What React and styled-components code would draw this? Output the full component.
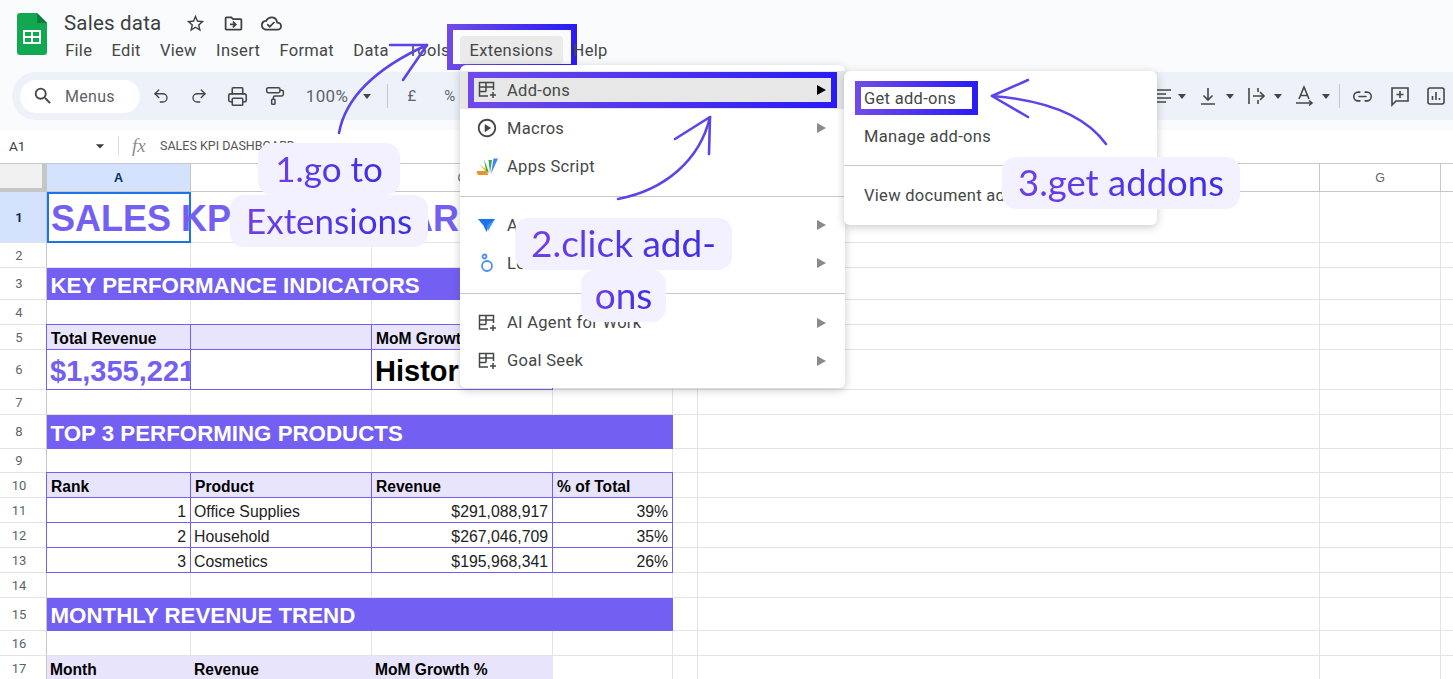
import styled, { createGlobalStyle } from 'styled-components';
import {
	MdArrowDropDown,
	MdOutlineCloudDone,
	MdOutlineDriveFileMove,
	MdOutlinePlayCircle,
	MdOutlineStarBorder,
	MdSearch,
} from 'react-icons/md';
import { Link2, PaintRoller, Printer, Redo2, Undo2 } from 'lucide-react';

const PURPLE = '#7360f2';
const LILAC = '#e8e4fb';
const GRID = '#e2e3e3';
const INK = '#444746';
const FRAME = 'linear-gradient(90deg, #6f4ae8, #2a1cf5) 1';

const COLUMNS = [47, 144, 181, 181, 120, 25, 622, 121, 132];
const LETTERS = ['A', 'B', 'C', 'D', '', 'F', 'G', 'H'];

const ROWS = [
	{ n: 1, h: 51, active: true, cells: [{ tone: 'selected', text: 'SALES KPI DASHBOARD' }, { tone: 'flow' }, { tone: 'flow' }] },
	{ n: 2, h: 25 },
	{ n: 3, h: 32, cells: [{ tone: 'bar', span: 4, text: 'KEY PERFORMANCE INDICATORS' }] },
	{ n: 4, h: 25 },
	{
		n: 5,
		h: 25,
		cells: [
			{ tone: 'label', text: 'Total Revenue' },
			{ tone: 'label' },
			{ tone: 'label', text: 'MoM Growth %' },
		],
	},
	{
		n: 6,
		h: 40,
		cells: [
			{ tone: 'stat', text: '$1,355,221,000' },
			{ tone: 'boxed' },
			{ tone: 'statDark', text: 'Historical' },
		],
	},
	{ n: 7, h: 25 },
	{ n: 8, h: 34, cells: [{ tone: 'bar', span: 4, text: 'TOP 3 PERFORMING PRODUCTS' }] },
	{ n: 9, h: 24 },
	{
		n: 10,
		h: 25,
		cells: [
			{ tone: 'label', text: 'Rank' },
			{ tone: 'label', text: 'Product' },
			{ tone: 'label', text: 'Revenue' },
			{ tone: 'label', text: '% of Total' },
		],
	},
	{
		n: 11,
		h: 25,
		cells: [
			{ tone: 'number', text: '1' },
			{ tone: 'boxed', text: 'Office Supplies' },
			{ tone: 'number', text: '$291,088,917' },
			{ tone: 'number', text: '39%' },
		],
	},
	{
		n: 12,
		h: 25,
		cells: [
			{ tone: 'number', text: '2' },
			{ tone: 'boxed', text: 'Household' },
			{ tone: 'number', text: '$267,046,709' },
			{ tone: 'number', text: '35%' },
		],
	},
	{
		n: 13,
		h: 25,
		cells: [
			{ tone: 'number', text: '3' },
			{ tone: 'boxed', text: 'Cosmetics' },
			{ tone: 'number', text: '$195,968,341' },
			{ tone: 'number', text: '26%' },
		],
	},
	{ n: 14, h: 25 },
	{ n: 15, h: 33, cells: [{ tone: 'bar', span: 4, text: 'MONTHLY REVENUE TREND' }] },
	{ n: 16, h: 25 },
	{
		n: 17,
		h: 25,
		cells: [
			{ tone: 'plainLabel', text: 'Month' },
			{ tone: 'plainLabel', text: 'Revenue' },
			{ tone: 'plainLabel', text: 'MoM Growth %' },
		],
	},
];

const GlobalStyle = createGlobalStyle`
	html, body {
		margin: 0;
		padding: 0;
		background: #fff;
	}
	* {
		box-sizing: border-box;
	}
`;

const Page = styled.div`
	position: relative;
	width: 1453px;
	height: 679px;
	overflow: hidden;
	font-family: Roboto, 'Liberation Sans', sans-serif;
	color: ${INK};
	background: #fff;
`;

const Header = styled.header`
	height: 130px;
	padding: 0 12px;
	background: #f9fbfd;
	display: flex;
	flex-direction: column;
`;

const TitleRow = styled.div`
	height: 72px;
	display: flex;
	gap: 17px;
	padding: 13px 0 0 5px;
`;

const TitleStack = styled.div`
	display: flex;
	flex-direction: column;
	gap: 3px;
`;

const TitleLine = styled.div`
	display: flex;
	align-items: center;
	gap: 17px;
	height: 20px;
	font-size: 20.5px;
	letter-spacing: 0.2px;
	color: #3c4043;
	svg {
		font-size: 21px;
	}
`;

const DocName = styled.span`
	margin-right: 6.5px;
`;

const MenuBar = styled.nav`
	display: flex;
	height: 28px;
	align-items: center;
	font-size: 16.5px;
	letter-spacing: 0.3px;
	margin-left: -8.5px;
`;

const MenuTab = styled.span`
	position: relative;
	display: flex;
	align-items: center;
	height: 28px;
	padding: 0 ${(p) => (p.$active ? '10px' : '9.65px')};
	border-radius: 4px;
	background: ${(p) => (p.$active ? '#ebebeb' : 'transparent')};
	&::after {
		content: ${(p) => (p.$active ? "''" : 'none')};
		position: absolute;
		inset: -12px -14px -6px -13px;
		border: 6px solid;
		border-image: ${FRAME};
	}
`;

const Toolbar = styled.div`
	height: 48px;
	margin-right: -12px;
	padding-left: 8px;
	display: flex;
	align-items: center;
	justify-content: space-between;
	background: #edf2fa;
	border-radius: 24px 0 0 24px;
`;

const ToolGroup = styled.div`
	display: flex;
	align-items: center;
`;

const SearchPill = styled.div`
	width: 120px;
	height: 33px;
	margin-right: 2px;
	padding: 0 12px;
	display: flex;
	align-items: center;
	gap: 11px;
	background: #fff;
	border-radius: 17px;
	font-size: 16px;
	letter-spacing: 0.3px;
	color: #5f6368;
	svg {
		font-size: 22px;
		color: ${INK};
	}
`;

const Tool = styled.span`
	width: ${(p) => p.$w || 38}px;
	height: 28px;
	display: flex;
	align-items: center;
	justify-content: center;
	font-size: ${(p) => p.$text || 15}px;
	letter-spacing: 0.3px;
	color: #5f6368;
	svg {
		flex: none;
		color: ${INK};
	}
`;

const ToolDivider = styled.span`
	width: 1px;
	height: 24px;
	margin: 0 ${(p) => p.$right}px 0 ${(p) => p.$left}px;
	background: #c7c7c7;
`;

const Caret = styled.i`
	width: 0;
	height: 0;
	margin: 0 ${(p) => p.$after ?? 8}px 0 3px;
	border: 4.5px solid transparent;
	border-top: 5px solid ${INK};
	border-bottom: 0;
`;

const FormulaBar = styled.div`
	height: 34px;
	padding: 0 0 2px 9px;
	display: flex;
	align-items: center;
	background: #fff;
	font-size: 13.5px;
	border-bottom: 1px solid #c7c7c7;
`;

const NameBox = styled.div`
	width: 109px;
	display: flex;
	align-items: center;
	justify-content: space-between;
	padding-right: 8px;
	color: #3c4043;
`;

const FxMark = styled.span`
	width: 1px;
	height: 20px;
	background: #e0e0e0;
`;

const Fx = styled.em`
	width: 41px;
	padding-left: 13px;
	font-family: 'Liberation Serif', serif;
	font-size: 19px;
	color: #8a8d91;
`;

const FormulaText = styled.span`
	font-size: 12.5px;
	color: #555;
`;

const Sheet = styled.main`
	display: grid;
	grid-template-columns: ${COLUMNS.map((c) => `${c}px`).join(' ')};
	grid-template-rows: 28px ${ROWS.map((r) => `${r.h}px`).join(' ')};
`;

const Corner = styled.div`
	background: #f1f1f1;
	border-right: 5px solid #c4c7c5;
	border-bottom: 4px solid #c4c7c5;
`;

const ColHead = styled.div`
	display: flex;
	align-items: center;
	justify-content: center;
	font-size: 12.5px;
	font-family: 'Liberation Sans', sans-serif;
	color: ${(p) => (p.$active ? '#0b2b60' : '#5f6368')};
	font-weight: ${(p) => (p.$active ? 700 : 400)};
	background: ${(p) => (p.$active ? '#d3e3fd' : '#fff')};
	border-right: 1px solid #c7c7c7;
	border-bottom: 1px solid #c7c7c7;
`;

const RowHead = styled.div`
	display: flex;
	align-items: center;
	justify-content: center;
	padding-right: 8px;
	font-size: 13px;
	color: ${(p) => (p.$active ? '#0b2b60' : '#5f6368')};
	font-weight: ${(p) => (p.$active ? 700 : 400)};
	background: ${(p) => (p.$active ? '#d3e3fd' : '#fff')};
	border-right: 1px solid #c7c7c7;
	border-bottom: 1px solid ${GRID};
`;

const toneStyles = {
	blank: `border-right: 1px solid ${GRID}; border-bottom: 1px solid ${GRID};`,
	flow: `border-bottom: 1px solid ${GRID};`,
	selected: `
		position: relative;
		z-index: 1;
		overflow: visible;
		padding: 3px 0 0 2px;
		border: 2px solid #1a73e8;
		font-size: 36px;
		font-weight: 700;
		color: ${PURPLE};
	`,
	bar: `
		padding: 3px 0 0 3.5px;
		background: ${PURPLE};
		color: #fff;
		font-size: 22.3px;
		font-weight: 700;
	`,
	label: `
		margin: -1px 0 0 -1px;
		padding: 4px 0 0 4px;
		background: ${LILAC};
		border: 1px solid ${PURPLE};
		font-size: 15.6px;
		font-weight: 700;
		color: #000;
	`,
	plainLabel: `
		padding: 3px 0 0 3px;
		background: ${LILAC};
		font-size: 15.6px;
		font-weight: 700;
		color: #000;
	`,
	boxed: `
		margin: -1px 0 0 -1px;
		padding: 4px 0 0 3px;
		border: 1px solid ${PURPLE};
		font-size: 15.8px;
		color: #222;
	`,
	number: `
		margin: -1px 0 0 -1px;
		padding: 4px 4px 0 0;
		justify-content: flex-end;
		border: 1px solid ${PURPLE};
		font-size: 15.8px;
		color: #222;
	`,
	stat: `
		margin: -1px 0 0 -1px;
		padding: 4px 0 0 3px;
		border: 1px solid ${PURPLE};
		font-size: 29px;
		font-weight: 700;
		color: ${PURPLE};
	`,
	statDark: `
		margin: -1px 0 0 -1px;
		padding: 4px 0 0 3px;
		border: 1px solid ${PURPLE};
		font-size: 29px;
		font-weight: 700;
		color: #000;
	`,
};

const Cell = styled.div`
	display: flex;
	align-items: center;
	min-width: 0;
	overflow: hidden;
	white-space: nowrap;
	font-family: 'Liberation Sans', sans-serif;
	grid-column: span ${(p) => p.$span || 1};
	${(p) => toneStyles[p.$tone || 'blank']}
`;

const Menu = styled.div`
	position: absolute;
	left: ${(p) => p.$left}px;
	top: ${(p) => p.$top}px;
	width: ${(p) => p.$width}px;
	padding: ${(p) => p.$pad};
	background: #fff;
	border-radius: 6px;
	box-shadow: 0 2px 8px rgba(60, 64, 67, 0.28);
	z-index: 3;
	font-size: 16.5px;
	letter-spacing: 0.3px;
`;

const MenuItem = styled.div`
	position: relative;
	height: 38.3px;
	display: flex;
	align-items: center;
	padding: 0 19px 0 ${(p) => p.$indent || 16}px;
	gap: 9px;
	background: ${(p) => (p.$active ? '#e7e7e7' : 'transparent')};
	&::after {
		content: ${(p) => (p.$frame ? "''" : 'none')};
		position: absolute;
		inset: ${(p) => p.$frame};
		border: 6px solid;
		border-image: ${FRAME};
	}
`;

const ItemIcon = styled.span`
	width: 22px;
	display: flex;
	justify-content: center;
	font-size: 22px;
`;

const ItemLabel = styled.span`
	flex: 1;
`;

const SubArrow = styled.i`
	width: 0;
	height: 0;
	border: 5px solid transparent;
	border-left: 9px solid ${(p) => (p.$active ? '#000' : '#8a8a8a')};
	border-right: 0;
`;

const MenuRule = styled.hr`
	margin: ${(p) => p.$gap || '10px 0'};
	border: 0;
	border-top: 1px solid #c9c9c9;
`;

const Callout = styled.div`
	position: absolute;
	left: ${(p) => p.$left}px;
	top: ${(p) => p.$top}px;
	z-index: 5;
	display: flex;
	flex-direction: column;
	align-items: center;
	font-family: Lato, 'Noto Sans', sans-serif;
	font-size: ${(p) => p.$size}px;
`;

const CalloutLine = styled.span`
	display: block;
	height: 52px;
	padding: 0 ${(p) => p.$pad || 16}px;
	border-radius: 14px;
	background: #f3f0ff;
	white-space: nowrap;
`;

const CalloutText = styled.span`
	display: block;
	line-height: 50px;
	background: linear-gradient(90deg, #6d3fe8, #3a2ee6);
	-webkit-background-clip: text;
	background-clip: text;
	color: transparent;
`;

const Doodles = styled.svg`
	position: absolute;
	inset: 0;
	z-index: 4;
	pointer-events: none;
`;

const SheetsLogo = () => (
	<svg width="30" height="42" viewBox="0 0 30 42">
		<path d="M3 0h17l10 10v29a3 3 0 0 1-3 3H3a3 3 0 0 1-3-3V3a3 3 0 0 1 3-3z" fill="#11a84f" />
		<path d="M20 0l10 10h-10z" fill="#0b7d3c" />
		<path d="M6 17h18v14H6z" fill="#fff" />
		<path d="M8 19h6v4H8zM16 19h6v4h-6zM8 25h6v4H8zM16 25h6v4h-6z" fill="#11a84f" />
	</svg>
);

const AddOnIcon = () => (
	<svg width="22" height="22" viewBox="0 0 22 22" fill="none" stroke="#444746" strokeWidth="1.5">
		<path d="M12 17H3.5V3.5h14V11" />
		<path d="M3.5 8h14M3.5 12.5H10M10 3.5v9" />
		<path d="M17 13v6M14 16h6" />
	</svg>
);

const AppsScriptIcon = () => (
	<svg width="22" height="18" viewBox="0 0 22 18">
		<path d="M1 13h10l1 4H3a3 3 0 0 1-2-4z" fill="#e8912d" />
		<path d="M3 6l8 6 1 4z" fill="#f4c20d" />
		<path d="M8 1l5 14-3-2z" fill="#34a853" />
		<path d="M12.5 2h3.5l-2 13z" fill="#34a853" />
		<path d="M17.5 0.5h4.5l-7 15.5z" fill="#4285f4" />
	</svg>
);

const AppSheetIcon = () => (
	<svg width="20" height="16" viewBox="0 0 20 16">
		<path d="M1 2h17l-5 6H6z" fill="#1a73e8" />
		<path d="M6 7.5h6L9.5 15z" fill="#1a73e8" />
		<path d="M18 2l-7 12-1.5-5z" fill="#4a90f0" />
	</svg>
);

const LookerIcon = () => (
	<svg width="18" height="20" viewBox="0 0 18 20" fill="none" stroke="#4f8ff0" strokeWidth="1.8">
		<circle cx="9" cy="13" r="5" />
		<circle cx="6.5" cy="3.5" r="2" />
	</svg>
);

const ToolIcon = ({ children }) => (
	<svg width="22" height="22" viewBox="0 0 22 22" fill="none" stroke="#444746" strokeWidth="1.6">
		{children}
	</svg>
);

const App = () => {
	return (
		<Page>
			<GlobalStyle />
			<Header>
				<TitleRow>
					<SheetsLogo />
					<TitleStack>
						<TitleLine>
							<DocName>Sales data</DocName>
							<MdOutlineStarBorder />
							<MdOutlineDriveFileMove />
							<MdOutlineCloudDone />
						</TitleLine>
						<MenuBar>
							<MenuTab>File</MenuTab>
							<MenuTab>Edit</MenuTab>
							<MenuTab>View</MenuTab>
							<MenuTab>Insert</MenuTab>
							<MenuTab>Format</MenuTab>
							<MenuTab>Data</MenuTab>
							<MenuTab>Tools</MenuTab>
							<MenuTab $active>Extensions</MenuTab>
							<MenuTab>Help</MenuTab>
						</MenuBar>
					</TitleStack>
				</TitleRow>
				<Toolbar>
					<ToolGroup>
						<SearchPill>
							<MdSearch />
							Menus
						</SearchPill>
						<Tool><Undo2 size={18} strokeWidth={1.8} /></Tool>
						<Tool><Redo2 size={18} strokeWidth={1.8} /></Tool>
						<Tool><Printer size={21} strokeWidth={1.8} /></Tool>
						<Tool><PaintRoller size={20} strokeWidth={1.8} /></Tool>
						<Tool $w={66} $text={17}>100%</Tool>
						<Caret $after={0} />
						<ToolDivider $left={16} $right={5} />
						<Tool>£</Tool>
						<Tool>%</Tool>
					</ToolGroup>
					<ToolGroup>
						<Tool $w={21}>
							<ToolIcon>
								<path d="M2 5h16M2 9h11M2 13h16M2 17h11" />
							</ToolIcon>
						</Tool>
						<Caret />
						<Tool $w={29}>
							<ToolIcon>
								<path d="M4 19h14M11 3v12M6.5 10.5L11 15l4.5-4.5" />
							</ToolIcon>
						</Tool>
						<Caret />
						<Tool $w={29}>
							<ToolIcon>
								<path d="M4 3v16M8 11h11M15 7l4 4-4 4M13 3v4M13 15v4" />
							</ToolIcon>
						</Tool>
						<Caret />
						<Tool $w={29}>
							<ToolIcon>
								<path d="M6 14L11 2l5 12M7.5 10.5h7M3 18h15M16 15.5l3 2.5-3 2.5" />
							</ToolIcon>
						</Tool>
						<Caret />
						<ToolDivider $left={1.5} $right={3} />
						<Tool><Link2 size={21} strokeWidth={1.8} /></Tool>
						<Tool>
							<ToolIcon>
								<path d="M3 3h16v13H7l-4 4zM11 6v7M7.5 9.5h7" />
							</ToolIcon>
						</Tool>
						<Tool $w={34}>
							<ToolIcon>
								<rect x="3" y="3" width="16" height="16" rx="2" />
								<path d="M7.5 15v-4M11 15V7M14.5 15v-2" />
							</ToolIcon>
						</Tool>
					</ToolGroup>
				</Toolbar>
			</Header>
			<FormulaBar>
				<NameBox>
					A1
					<MdArrowDropDown size={20} />
				</NameBox>
				<FxMark />
				<Fx>fx</Fx>
				<FormulaText>SALES KPI DASHBOARD</FormulaText>
			</FormulaBar>
			<Sheet>
				<Corner />
				{LETTERS.map((l, i) => (
					<ColHead key={i} $active={l === 'A'}>{l}</ColHead>
				))}
				{ROWS.map((row) => {
					const cells = row.cells || [];
					const used = cells.reduce((sum, c) => sum + (c.span || 1), 0);
					return [
						<RowHead key={`h${row.n}`} $active={row.active}>{row.n}</RowHead>,
						...cells.map((c, i) => (
							<Cell key={`${row.n}-${i}`} $tone={c.tone} $span={c.span}>{c.text}</Cell>
						)),
						...Array.from({ length: 8 - used }, (_, i) => (
							<Cell key={`${row.n}-b${i}`} />
						)),
					];
				})}
			</Sheet>

			<Menu $left={460} $top={65} $width={385} $pad="6px 0 8px">
				<MenuItem $active $frame="1px 8px">
					<ItemIcon><AddOnIcon /></ItemIcon>
					<ItemLabel>Add-ons</ItemLabel>
					<SubArrow $active />
				</MenuItem>
				<MenuItem>
					<ItemIcon><MdOutlinePlayCircle /></ItemIcon>
					<ItemLabel>Macros</ItemLabel>
					<SubArrow />
				</MenuItem>
				<MenuItem>
					<ItemIcon><AppsScriptIcon /></ItemIcon>
					<ItemLabel>Apps Script</ItemLabel>
				</MenuItem>
				<MenuRule $gap="10px 0 9px" />
				<MenuItem>
					<ItemIcon><AppSheetIcon /></ItemIcon>
					<ItemLabel>AppSheet</ItemLabel>
					<SubArrow />
				</MenuItem>
				<MenuItem>
					<ItemIcon><LookerIcon /></ItemIcon>
					<ItemLabel>Looker Studio</ItemLabel>
					<SubArrow />
				</MenuItem>
				<MenuRule $gap="10.5px 0 9.5px" />
				<MenuItem>
					<ItemIcon><AddOnIcon /></ItemIcon>
					<ItemLabel>AI Agent for Work</ItemLabel>
					<SubArrow />
				</MenuItem>
				<MenuItem>
					<ItemIcon><AddOnIcon /></ItemIcon>
					<ItemLabel>Goal Seek</ItemLabel>
					<SubArrow />
				</MenuItem>
			</Menu>

			<Menu $left={844} $top={71} $width={313} $pad="8px 0 10px">
				<MenuItem $indent={20} $frame="2px 179px 2px 11px">Get add-ons</MenuItem>
				<MenuItem $indent={20}>Manage add-ons</MenuItem>
				<MenuRule $gap="9.5px 0 10.5px" />
				<MenuItem $indent={20}>View document add-ons</MenuItem>
			</Menu>

			<Doodles width="1453" height="679" viewBox="0 0 1453 679" fill="none" stroke="#5b45e8" strokeLinecap="round" strokeLinejoin="round" strokeWidth="2.6">
				<path d="M339 133C345 100 372 70 427 45" />
				<path d="M390 45L427 45L403 80" />
				<path d="M618 199C665 190 700 160 710 117" />
				<path d="M675 139L710 117L709 154" />
				<path d="M1106 144C1085 115 1045 100 992 96" />
				<path d="M1028 80L992 96L1028 117" />
			</Doodles>

			<Callout $left={230} $top={143} $size={35}>
				<CalloutLine $pad={17}><CalloutText>1.go to</CalloutText></CalloutLine>
				<CalloutLine><CalloutText>Extensions</CalloutText></CalloutLine>
			</Callout>
			<Callout $left={515} $top={218} $size={37}>
				<CalloutLine><CalloutText>2.click add-</CalloutText></CalloutLine>
				<CalloutLine $pad={14}><CalloutText>ons</CalloutText></CalloutLine>
			</Callout>
			<Callout $left={1002} $top={157} $size={36.5}>
				<CalloutLine><CalloutText>3.get addons</CalloutText></CalloutLine>
			</Callout>
		</Page>
	);
};

export default App;
